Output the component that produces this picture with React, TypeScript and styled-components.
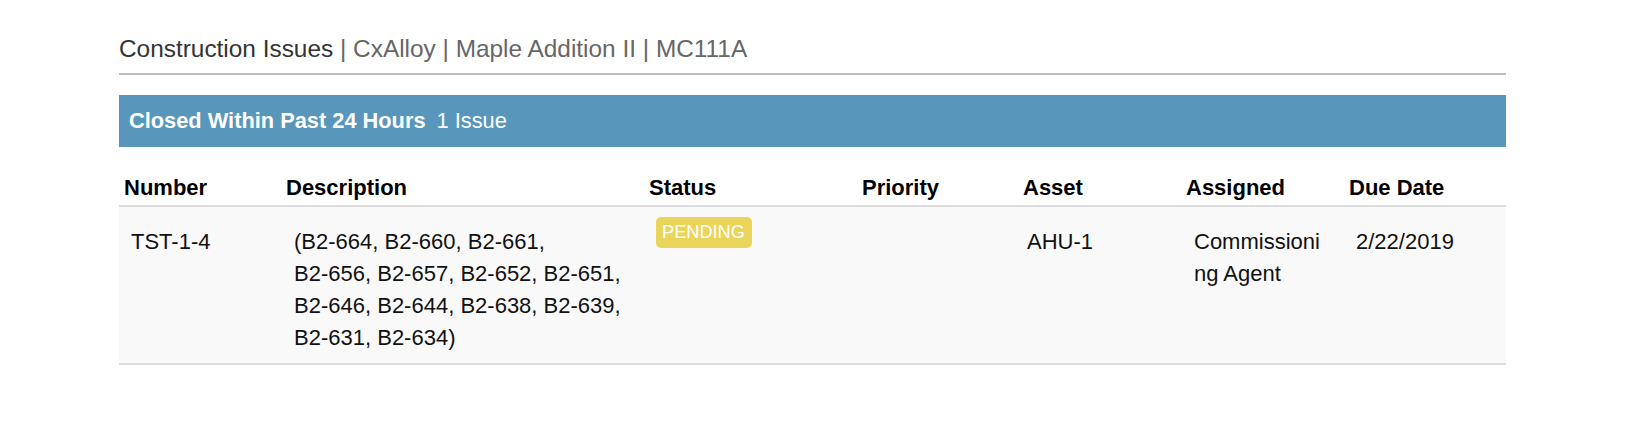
import React from "react";
import styled, { createGlobalStyle } from "styled-components";

const GlobalStyle = createGlobalStyle`
  html, body {
    margin: 0;
    padding: 0;
    background: #ffffff;
  }
  body {
    font-family: "Liberation Sans", Arial, Helvetica, sans-serif;
    color: #000;
  }
  * { box-sizing: border-box; }
`;

const Page = styled.div`
  width: 1387px;
  margin: 0 0 0 119px;
  padding-top: 35px;
`;

const Title = styled.h1`
  margin: 0;
  font-size: 24.4px;
  line-height: 28px;
  font-weight: normal;
  color: #666;
  padding-bottom: 10px;
  border-bottom: 2px solid #bdbdbd;
`;

const TitleMain = styled.span`
  color: #333;
`;

const SectionBar = styled.div`
  margin-top: 20px;
  height: 52px;
  background: #5897bb;
  color: #fff;
  display: flex;
  align-items: center;
  gap: 11px;
  padding-left: 10px;
  font-size: 21.8px;
`;

const SectionName = styled.strong`
  font-weight: bold;
`;

const SectionCount = styled.span`
  font-weight: normal;
`;

const columns = "162px 363px 213px 161px 163px 163px 162px";

const HeadRow = styled.div`
  margin-top: 25px;
  display: grid;
  grid-template-columns: ${columns};
  border-bottom: 2px solid #dddddd;
`;

const HeadCell = styled.div`
  font-size: 22px;
  font-weight: bold;
  line-height: 32px;
  padding: 0 6px 1px 5px;
  color: #000;
`;

const BodyRow = styled.div`
  display: grid;
  grid-template-columns: ${columns};
  background: #f9f9f9;
  border-bottom: 2px solid #dddddd;
`;

const BodyCell = styled.div<{ $padRight?: number; $padLeft?: number }>`
  font-size: 22px;
  line-height: 32px;
  color: #111;
  padding: 19px ${(p) => p.$padRight ?? 12}px 9px ${(p) => p.$padLeft ?? 12}px;
  overflow-wrap: anywhere;
`;

const Code = styled.span`
  white-space: nowrap;
`;

const StatusCell = styled.div`
  padding: 10px 12px 9px 12px;
`;

const Badge = styled.span`
  display: inline-block;
  background: #ead459;
  color: #fff;
  font-size: 18.2px;
  line-height: 23px;
  padding: 4px 7px 4px 6px;
  border-radius: 5px;
`;

const headers = ["Number", "Description", "Status", "Priority", "Asset", "Assigned", "Due Date"];

const codes = [
  "B2-664",
  "B2-660",
  "B2-661",
  "B2-656",
  "B2-657",
  "B2-652",
  "B2-651",
  "B2-646",
  "B2-644",
  "B2-638",
  "B2-639",
  "B2-631",
  "B2-634",
];

export default function App() {
  return (
    <>
      <GlobalStyle />
      <Page>
        <Title>
          <TitleMain>Construction Issues</TitleMain> | CxAlloy | Maple Addition II | MC111A
        </Title>
        <SectionBar>
          <SectionName>Closed Within Past 24 Hours</SectionName>
          <SectionCount>1 Issue</SectionCount>
        </SectionBar>
        <HeadRow>
          {headers.map((h) => (
            <HeadCell key={h}>{h}</HeadCell>
          ))}
        </HeadRow>
        <BodyRow>
          <BodyCell>TST-1-4</BodyCell>
          <BodyCell $padLeft={13} $padRight={20}>
            (
            {codes.map((c, i) => (
              <React.Fragment key={c}>
                <Code>
                  {c}
                  {i < codes.length - 1 ? "," : ")"}
                </Code>
                {i < codes.length - 1 ? " " : ""}
              </React.Fragment>
            ))}
          </BodyCell>
          <StatusCell>
            <Badge>PENDING</Badge>
          </StatusCell>
          <BodyCell />
          <BodyCell $padLeft={9}>AHU-1</BodyCell>
          <BodyCell $padLeft={13} $padRight={18}>Commissioning Agent</BodyCell>
          <BodyCell>2/22/2019</BodyCell>
        </BodyRow>
      </Page>
    </>
  );
}
